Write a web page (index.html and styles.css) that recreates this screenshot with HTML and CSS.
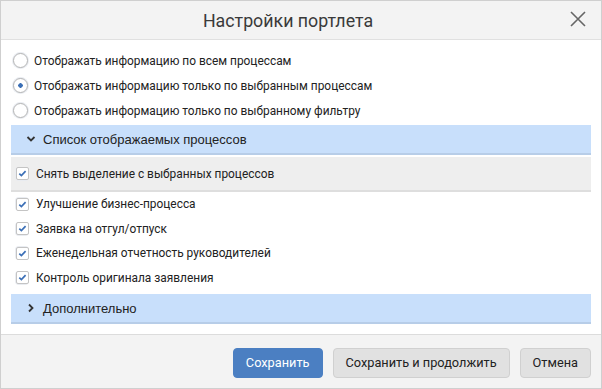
FILE: index.html
```html
<!DOCTYPE html>
<html lang="ru">
<head>
    <meta charset="UTF-8">
    <meta name="viewport" content="width=device-width, initial-scale=1.0">
    <title>Настройки портлета</title>
    <link rel="stylesheet" href="styles.css">
</head>
<body>
    <div class="dialog">
        <div class="dialog-header">
            <h2>Настройки портлета</h2>
            <button class="close" aria-label="Закрыть">
                <svg width="18" height="18" viewBox="0 0 18 18">
                    <path d="M2 2 L16 16 M16 2 L2 16" stroke="#666" stroke-width="1.6" fill="none"/>
                </svg>
            </button>
        </div>

        <div class="dialog-body">
            <label class="option">
                <span class="radio"></span>
                Отображать информацию по всем процессам
            </label>
            <label class="option">
                <span class="radio checked"></span>
                Отображать информацию только по выбранным процессам
            </label>
            <label class="option">
                <span class="radio"></span>
                Отображать информацию только по выбранному фильтру
            </label>

            <div class="panel-title">
                <svg class="chevron" width="10" height="10" viewBox="0 0 10 10">
                    <path d="M1.5 3 L5 6.5 L8.5 3" stroke="#333" stroke-width="1.8" fill="none"/>
                </svg>
                Список отображаемых процессов
            </div>
            <div class="select-all">
                <span class="check"></span>
                Снять выделение с выбранных процессов
            </div>
            <div class="process-list">
                <label class="option small"><span class="check"></span>Улучшение бизнес-процесса</label>
                <label class="option small"><span class="check"></span>Заявка на отгул/отпуск</label>
                <label class="option small"><span class="check"></span>Еженедельная отчетность руководителей</label>
                <label class="option small"><span class="check"></span>Контроль оригинала заявления</label>
            </div>

            <div class="panel-title extra">
                <svg class="chevron" width="10" height="10" viewBox="0 0 10 10">
                    <path d="M3 1.5 L6.5 5 L3 8.5" stroke="#333" stroke-width="1.8" fill="none"/>
                </svg>
                Дополнительно
            </div>
        </div>

        <div class="dialog-footer">
            <button class="btn primary">Сохранить</button>
            <button class="btn">Сохранить и продолжить</button>
            <button class="btn">Отмена</button>
        </div>
    </div>
</body>
</html>
```

FILE: styles.css
```css
* {
    box-sizing: border-box;
}

body {
    margin: 0;
    font-family: Roboto, 'Liberation Sans', sans-serif;
    font-size: 11.9px;
    color: #222;
    background: #fff;
}

.dialog {
    width: 602px;
    height: 389px;
    border: 1px solid #cfcfcf;
    display: flex;
    flex-direction: column;
}

.dialog-header {
    height: 39px;
    background: #f3f3f3;
    border-bottom: 1px solid #e0e0e0;
    display: flex;
    align-items: center;
    justify-content: center;
    padding-right: 26px;
    position: relative;
}

.dialog-header h2 {
    margin: 0;
    font-size: 17.8px;
    font-weight: normal;
    color: #3a3a3a;
}

.close {
    position: absolute;
    right: 14px;
    top: 9px;
    background: none;
    border: none;
    padding: 0;
    cursor: pointer;
}

.dialog-body {
    flex: 1;
    padding: 8px 10px 0 10px;
}

.option {
    display: flex;
    align-items: center;
    gap: 5px;
    height: 25px;
    padding-left: 1px;
}

.option.small {
    height: 24.5px;
    padding-left: 4px;
    gap: 7px;
}

.radio {
    width: 17px;
    height: 17px;
    border-radius: 50%;
    background: #e9ecf1;
    display: flex;
    align-items: center;
    justify-content: center;
}

.radio::before {
    content: '';
    width: 13px;
    height: 13px;
    border-radius: 50%;
    background: #fff;
    border: 1px solid #b5b5b5;
}

.radio.checked::before {
    background: radial-gradient(circle, #3b6fb6 0 2px, #fff 2.5px);
}

.check {
    width: 14px;
    height: 14px;
    border-radius: 4px;
    background: #e9ecf1;
    display: flex;
    align-items: center;
    justify-content: center;
    flex-shrink: 0;
}

.check::before {
    content: '';
    width: 11px;
    height: 11px;
    border-radius: 2px;
    background: #fff url("data:image/svg+xml,%3Csvg xmlns='http://www.w3.org/2000/svg' width='11' height='11' viewBox='0 0 11 11'%3E%3Cpath d='M2.3 5.6 L4.4 7.6 L8.6 3.2' stroke='%233b6fb6' stroke-width='1.7' fill='none'/%3E%3C/svg%3E") no-repeat center;
    border: 1px solid #c4c4c4;
}

.panel-title {
    height: 30px;
    margin-top: 2px;
    background: #c8dffb;
    border-bottom: 2px solid #b7cde8;
    display: flex;
    align-items: center;
    gap: 7px;
    padding-left: 15px;
    font-family: 'Liberation Sans', Arial, sans-serif;
    font-size: 13px;
    color: #222;
}

.panel-title.extra {
    margin-top: 4px;
}

.select-all {
    height: 35px;
    margin-top: 2px;
    background: #eeeeee;
    border-bottom: 2px solid #dedede;
    display: flex;
    align-items: center;
    gap: 7px;
    padding-left: 4px;
}

.dialog-footer {
    height: 54px;
    background: #f3f3f3;
    border-top: 1px solid #dcdcdc;
    display: flex;
    align-items: center;
    justify-content: flex-end;
    gap: 10px;
    padding: 2px 10px 0 0;
}

.btn {
    height: 30px;
    padding: 0 12px;
    font-family: Roboto, 'Liberation Sans', sans-serif;
    font-size: 12.75px;
    color: #222;
    background: #e1e1e1;
    border: 1px solid #d0d0d0;
    border-radius: 4px;
    cursor: pointer;
}

.btn.primary {
    background: #4b7fc2;
    border-color: #4b7fc2;
    color: #fff;
}
```
